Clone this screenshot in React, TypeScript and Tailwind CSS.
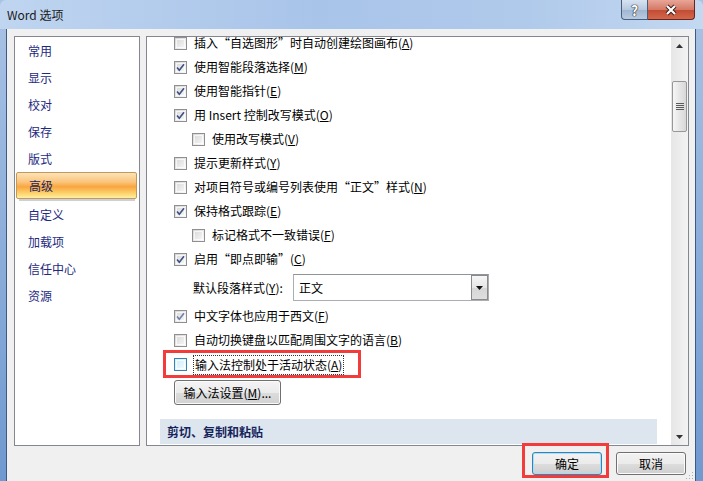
import React from "react";

const font =
  "font-['Noto_Sans_CJK_SC','Microsoft_YaHei','Noto_Sans',sans-serif]";

function Check({ checked, hot, dim }: { checked?: boolean; hot?: boolean; dim?: boolean }) {
  return (
    <span
      className={
        "relative block w-[13px] h-[13px] shrink-0 border " +
        (hot
          ? "border-[#3c7fb1] bg-[linear-gradient(135deg,#cfeefc,#f2fbff)]"
          : "border-[#8f8f8f] bg-[linear-gradient(135deg,#d6d6d6,#fafafa)]")
      }
    >
      <span className="absolute inset-[1px] border border-white/70" />
      {checked && (
        <svg viewBox="0 0 13 13" className="absolute -left-[1px] -top-[1px] w-[13px] h-[13px]">
          <path
            d="M3 6.5 L5.3 9.2 L10 3.2"
            fill="none"
            stroke={dim ? "#6f80a8" : "#3d5183"}
            strokeWidth="1.6"
          />
        </svg>
      )}
    </span>
  );
}

function Row({
  children,
  checked,
  indent,
  dim,
}: {
  children: React.ReactNode;
  checked?: boolean;
  indent?: boolean;
  dim?: boolean;
}) {
  return (
    <div className={"h-[24px] flex items-center gap-[7px] " + (indent ? "pl-[18px]" : "")}>
      <Check checked={checked} dim={dim} />
      <span className="whitespace-nowrap">{children}</span>
    </div>
  );
}

const navTop = ["常用", "显示", "校对", "保存", "版式"];
const navBottom = ["自定义", "加载项", "信任中心", "资源"];

export default function App() {
  return (
    <div
      className={
        "w-[703px] h-[481px] overflow-hidden relative text-[12px] text-black leading-none bg-[linear-gradient(to_bottom,#a9c3e4,#7099d0)] " +
        font
      }
    >
      {/* TITLE BAR */}
      <div className="h-[29px] flex items-start rounded-t-[6px] bg-[linear-gradient(to_right,#bfd5f0,#a8c4e9_45%,#b0caeb_75%,#c3d8f1)]">
        <div className="pl-[7px] pt-[9px] text-[12px] text-[#1a1a1a]">Word 选项</div>
        <div className="ml-auto mr-[8px] flex">
          <div className="w-[27px] h-[20px] border border-[#4a5d78] border-t-0 rounded-bl-[4px] bg-[linear-gradient(to_bottom,#d7e3f1,#b7c9df_50%,#9fb4cf_51%,#b7cbe2)] flex items-center justify-center">
            <span className="text-white font-bold text-[14px] [text-shadow:0_0_1px_#222,0_0_1px_#222,0_0_1px_#222]">
              ?
            </span>
          </div>
          <div className="w-[47px] h-[20px] border border-[#6b2419] border-t-0 border-l-0 rounded-br-[4px] bg-[linear-gradient(to_bottom,#e8a597,#d47a66_50%,#c24a33_51%,#d2674c)] flex items-center justify-center">
            <svg viewBox="0 0 14 12" className="w-[14px] h-[12px]">
              <path d="M3 2 L11 10 M11 2 L3 10" stroke="#3a1a14" strokeWidth="4" />
              <path d="M3 2 L11 10 M11 2 L3 10" stroke="#fff" strokeWidth="2.2" />
            </svg>
          </div>
        </div>
      </div>

      {/* FRAME + CLIENT */}
      <div className="flex h-[452px]">
        <div className="w-[7px] border-r border-[#3b5a84]" />
        <div className="relative w-[688px] bg-[#f0f0f0] flex flex-col">
          <div className="flex gap-[6px] pt-[7px] pl-[7px]">
            {/* LEFT NAV */}
            <div className="w-[126px] h-[410px] border border-[#828790] bg-white flex flex-col text-[#1e2a7e]">
              {navTop.map((t) => (
                <div key={t} className="h-[27px] flex items-center pl-[13px]">
                  {t}
                </div>
              ))}
              <div className="h-[27px] ml-[1px] mr-[2px] flex items-center pl-[12px] border border-[#c4985a] rounded-[2px] bg-[linear-gradient(to_bottom,#fde3b8_0%,#fbc57e_35%,#f9a640_55%,#fdd06a_80%,#fff1a2_100%)] text-[#1a2560]">
                高级
              </div>
              <div className="h-[2px] mx-[4px] bg-[#cbd1d8]" />
              {navBottom.map((t) => (
                <div key={t} className="h-[27px] flex items-center pl-[13px]">
                  {t}
                </div>
              ))}
            </div>

            {/* RIGHT PANEL */}
            <div className="w-[543px] h-[410px] border border-[#828790] bg-white flex">
              <div className="flex-1 overflow-hidden">
                <div className="-mt-[6px] pl-[27px] flex flex-col">
                  <Row>
                    插入“自选图形”时自动创建绘图画布(<u>A</u>)
                  </Row>
                  <Row checked>
                    使用智能段落选择(<u>M</u>)
                  </Row>
                  <Row checked>
                    使用智能指针(<u>E</u>)
                  </Row>
                  <Row checked>
                    用 Insert 控制改写模式(<u>O</u>)
                  </Row>
                  <Row indent>
                    使用改写模式(<u>V</u>)
                  </Row>
                  <Row>
                    提示更新样式(<u>Y</u>)
                  </Row>
                  <Row>
                    对项目符号或编号列表使用“正文”样式(<u>N</u>)
                  </Row>
                  <Row checked>
                    保持格式跟踪(<u>E</u>)
                  </Row>
                  <Row indent>
                    标记格式不一致错误(<u>F</u>)
                  </Row>
                  <Row checked>
                    启用“即点即输”(<u>C</u>)
                  </Row>
                  {/* DEFAULT PARAGRAPH STYLE */}
                  <div className="h-[33px] flex items-center pl-[19px]">
                    <span className="w-[100px] whitespace-nowrap">
                      默认段落样式(<u>Y</u>):
                    </span>
                    <div className="w-[196px] h-[27px] border border-[#abadb3] border-t-[#8f939b] bg-white flex items-center">
                      <span className="pl-[5px] flex-1">正文</span>
                      <div className="w-[17px] h-[25px] border border-[#8a8a8a] bg-[linear-gradient(to_bottom,#f6f6f6,#e6e6e6_50%,#d6d6d6_51%,#dedede)] flex items-center justify-center">
                        <svg viewBox="0 0 7 4" className="w-[7px] h-[4px]">
                          <path d="M0 0 H7 L3.5 4 Z" fill="#111" />
                        </svg>
                      </div>
                    </div>
                  </div>
                  <Row checked dim>
                    中文字体也应用于西文(<u>F</u>)
                  </Row>
                  <Row>
                    自动切换键盘以匹配周围文字的语言(<u>B</u>)
                  </Row>
                  <div className="h-[25px] flex items-center gap-[6px]">
                    <Check hot />
                    <span className="whitespace-nowrap border border-dotted border-[#333] px-[1px] py-[3px]">
                      输入法控制处于活动状态(<u>A</u>)
                    </span>
                  </div>
                  <div className="mt-[3px]">
                    <button className="w-[107px] h-[25px] border border-[#707070] rounded-[3px] bg-[linear-gradient(to_bottom,#f4f4f4,#ebebeb_50%,#dcdcdc_51%,#d2d2d2)] shadow-[inset_0_0_0_1px_#fbfbfb]">
                      输入法设置(<u>M</u>)...
                    </button>
                  </div>
                  <div className="mt-[14px] -ml-[14px] w-[497px] h-[25px] bg-[#dde6ee] flex items-center pl-[7px] font-bold text-[#15245c]">
                    剪切、复制和粘贴
                  </div>
                </div>
              </div>
              {/* SCROLLBAR */}
              <div className="w-[17px] flex flex-col bg-[linear-gradient(to_right,#e6e6e6,#f3f3f3)]">
                <div className="h-[17px] flex items-center justify-center">
                  <svg viewBox="0 0 7 4" className="w-[7px] h-[4px]">
                    <path d="M0 4 H7 L3.5 0 Z" fill="#333" />
                  </svg>
                </div>
                <div className="mt-[27px] mx-[1px] h-[51px] border border-[#979797] rounded-[2px] bg-[linear-gradient(to_right,#f6f6f6,#e6e6e6_50%,#d8d8d8)] flex flex-col items-center justify-center gap-[1px]">
                  <span className="block w-[8px] h-[1px] bg-[#5b5b5b]" />
                  <span className="block w-[8px] h-[1px] bg-[#5b5b5b]" />
                  <span className="block w-[8px] h-[1px] bg-[#5b5b5b]" />
                  <span className="block w-[8px] h-[1px] bg-[#5b5b5b]" />
                </div>
                <div className="flex-1" />
                <div className="h-[17px] flex items-center justify-center">
                  <svg viewBox="0 0 7 4" className="w-[7px] h-[4px]">
                    <path d="M0 0 H7 L3.5 4 Z" fill="#333" />
                  </svg>
                </div>
              </div>
            </div>
          </div>

          {/* BOTTOM BUTTONS */}
          <div className="flex justify-end gap-[14px] pr-[9px] mt-[6px]">
            <button className="w-[70px] h-[23px] border border-[#3c7fb1] rounded-[3px] bg-[linear-gradient(to_bottom,#f2f2f2,#ebebeb_50%,#dddddd_51%,#cfcfcf)] shadow-[inset_0_0_0_1px_#9fe0fa]">
              确定
            </button>
            <button className="w-[70px] h-[23px] border border-[#707070] rounded-[3px] bg-[linear-gradient(to_bottom,#f2f2f2,#ebebeb_50%,#dddddd_51%,#cfcfcf)] shadow-[inset_0_0_0_1px_#fbfbfb]">
              取消
            </button>
          </div>

          {/* RESIZE GRIP */}
          <svg viewBox="0 0 10 10" className="absolute right-[1px] bottom-[1px] w-[10px] h-[10px]">
            <rect x="8" y="2" width="1" height="1" fill="#b0b0b0" />
            <rect x="5" y="5" width="1" height="1" fill="#b0b0b0" />
            <rect x="8" y="5" width="1" height="1" fill="#b0b0b0" />
            <rect x="2" y="8" width="1" height="1" fill="#b0b0b0" />
            <rect x="5" y="8" width="1" height="1" fill="#b0b0b0" />
            <rect x="8" y="8" width="1" height="1" fill="#b0b0b0" />
          </svg>

          {/* ANNOTATION BOXES */}
          <div className="absolute left-[156px] top-[321px] w-[198px] h-[28px] border-[3px] border-[#f23c3c]" />
          <div className="absolute left-[515px] top-[414px] w-[87px] h-[35px] border-[3px] border-[#f23c3c]" />
        </div>
        <div className="w-[8px] border-l border-[#3b5a84]" />
      </div>
    </div>
  );
}
